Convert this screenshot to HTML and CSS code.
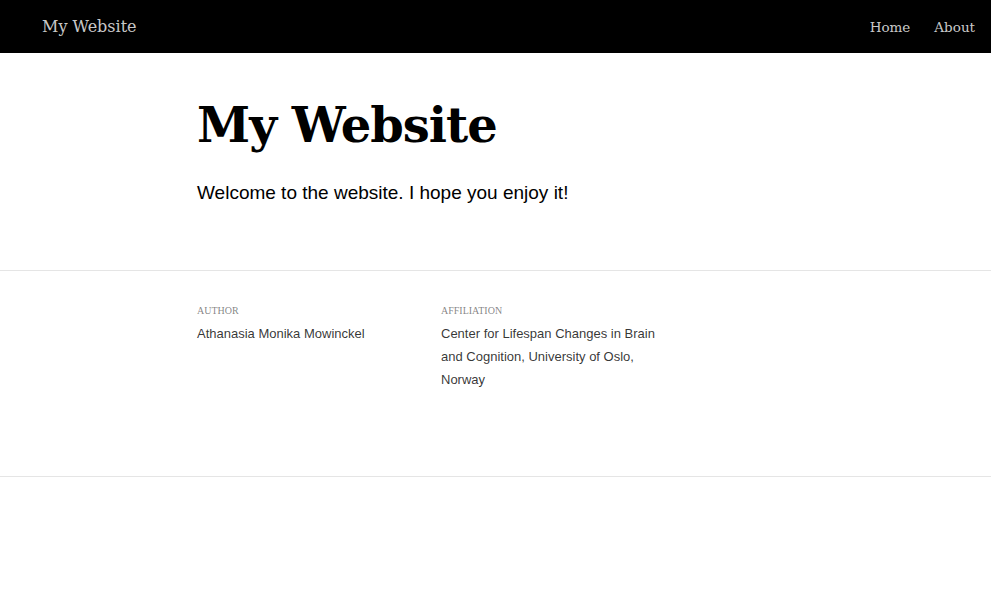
FILE: index.html
```html
<!DOCTYPE html>
<html lang="en">
<head>
<meta charset="utf-8">
<title>My Website</title>
<link rel="stylesheet" href="styles.css">
</head>
<body>
<header class="site-header">
  <a class="brand" href="#">My Website</a>
  <nav class="nav">
    <a href="#">Home</a>
    <a href="#">About</a>
  </nav>
</header>
<main>
  <section class="title">
    <h1>My Website</h1>
    <p class="lead">Welcome to the website. I hope you enjoy it!</p>
  </section>
  <section class="byline">
    <div class="byline-grid">
      <div class="byline-col">
        <h3>Author</h3>
        <p>Athanasia Monika Mowinckel</p>
      </div>
      <div class="byline-col">
        <h3>Affiliation</h3>
        <p>Center for Lifespan Changes in Brain and Cognition, University of Oslo, Norway</p>
      </div>
    </div>
  </section>
</main>
</body>
</html>
```
FILE: styles.css
```css
html, body {
  margin: 0;
  padding: 0;
  background: #fff;
}
body {
  font-family: "Liberation Sans", Arial, sans-serif;
  color: #000;
}
.site-header {
  height: 53px;
  background: #000;
  display: flex;
  align-items: center;
  justify-content: space-between;
  padding: 0 16px 0 42px;
  font-family: "DejaVu Serif", Georgia, serif;
}
.site-header a {
  color: rgba(255, 255, 255, 0.8);
  text-decoration: none;
}
.brand {
  font-size: 16px;
  padding-bottom: 1px;
}
.nav {
  display: flex;
  gap: 24px;
  font-size: 13.5px;
}
.title {
  padding: 45px 0 63px 197px;
  border-bottom: 1px solid rgba(0, 0, 0, 0.1);
}
.title h1 {
  margin: 0;
  font-family: "DejaVu Serif", Georgia, serif;
  font-weight: 700;
  font-size: 48px;
  line-height: 55px;
  letter-spacing: -1px;
}
.lead {
  margin: 26px 0 0;
  font-size: 19px;
  line-height: 28px;
}
.byline {
  border-bottom: 1px solid rgba(0, 0, 0, 0.1);
  padding: 32px 0 85px 197px;
}
.byline-grid {
  display: grid;
  grid-template-columns: 244px 220px;
}
.byline-col h3 {
  margin: 0 0 3px;
  font-family: "Liberation Serif", "Times New Roman", serif;
  font-weight: 400;
  font-size: 10px;
  line-height: 16px;
  text-transform: uppercase;
  color: rgba(0, 0, 0, 0.5);
}
.byline-col p {
  margin: 0;
  font-size: 13px;
  line-height: 23px;
  color: rgba(0, 0, 0, 0.8);
}
```
